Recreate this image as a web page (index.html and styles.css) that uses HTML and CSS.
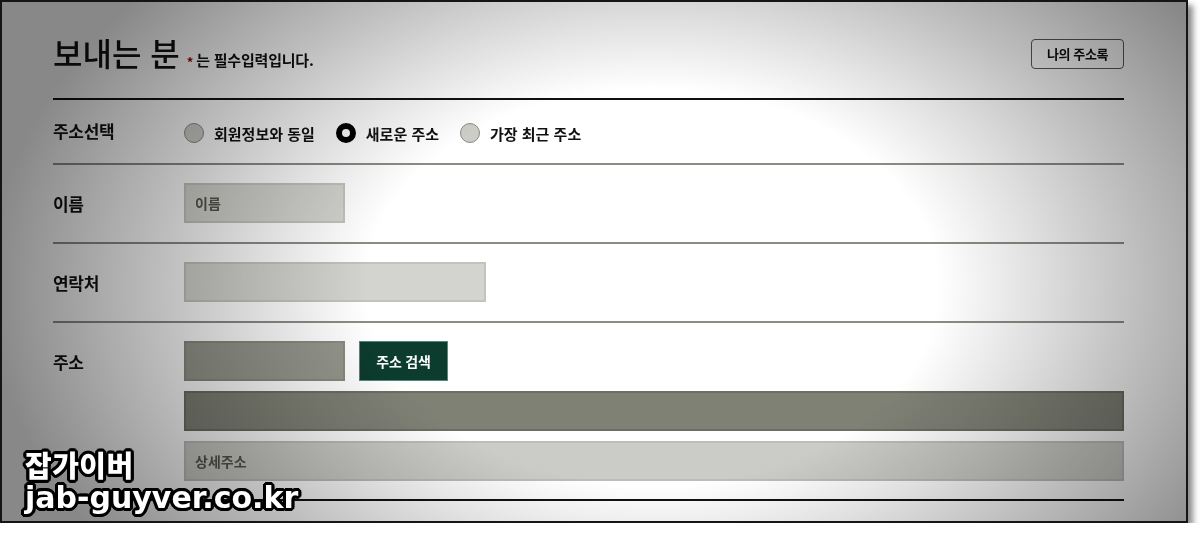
FILE: index.html
```html
<!DOCTYPE html>
<html lang="ko">
<head>
<meta charset="utf-8">
<title>보내는 분</title>
<link rel="stylesheet" href="styles.css">
</head>
<body>
<div class="frame">
  <div class="page">
    <header class="head">
      <div class="title-group">
        <h1 class="title">보내는 분</h1>
        <span class="req"><span class="star">*</span>는 필수입력입니다.</span>
      </div>
      <button class="book" type="button">나의 주소록</button>
    </header>

    <div class="row row-radio">
      <div class="label">주소선택</div>
      <div class="field radios">
        <label class="opt"><span class="radio"></span>회원정보와 동일</label>
        <label class="opt"><span class="radio on"></span>새로운 주소</label>
        <label class="opt"><span class="radio"></span>가장 최근 주소</label>
      </div>
    </div>

    <div class="row">
      <div class="label">이름</div>
      <div class="field">
        <div class="input w-short">이름</div>
      </div>
    </div>

    <div class="row">
      <div class="label">연락처</div>
      <div class="field">
        <div class="input w-mid"></div>
      </div>
    </div>

    <div class="row row-last">
      <div class="label">주소</div>
      <div class="field stack">
        <div class="line">
          <div class="input w-short zip"></div>
          <button class="search" type="button">주소 검색</button>
        </div>
        <div class="input full addr"></div>
        <div class="input full detail">상세주소</div>
      </div>
    </div>
  </div>
  <div class="vignette"></div>
  <div class="watermark">
    <div class="wm-ko">잡가이버</div>
    <div class="wm-en">jab-guyver.co.kr</div>
  </div>
</div>
</body>
</html>
```

FILE: styles.css
```css
* { box-sizing: border-box; }

html, body {
  margin: 0;
  padding: 0;
  background: #ffffff;
}

body {
  font-family: "Noto Sans CJK KR", "Noto Sans", sans-serif;
  color: #111;
}

.frame {
  position: relative;
  width: 1188px;
  height: 523px;
  border: 2px solid #151515;
  background: #ffffff;
  box-shadow: 5px 5px 6px rgba(0, 0, 0, 0.45);
  overflow: hidden;
}

.page {
  padding: 0 62px 0 51px;
}

/* header */
.head {
  display: flex;
  align-items: center;
  justify-content: space-between;
  padding: 35px 0 28px;
  border-bottom: 2px solid #111;
}

.title-group {
  display: flex;
  align-items: baseline;
}

.title {
  margin: 0;
  font-size: 32px;
  line-height: 30px;
  font-weight: 500;
  letter-spacing: 0;
  color: #111;
}

.req {
  margin-left: 7px;
  font-size: 15px;
  font-weight: 700;
  letter-spacing: -0.2px;
  color: #111;
}

.star {
  color: #a00000;
  font-size: 13px;
  margin-right: 3px;
  position: relative;
  top: 1px;
}

.book {
  width: 93px;
  height: 30px;
  padding: 0;
  border: 1.5px solid #5a5a5a;
  border-radius: 4px;
  background: transparent;
  font-family: inherit;
  font-size: 13px;
  font-weight: 700;
  letter-spacing: -0.4px;
  color: #111;
}

/* rows */
.row {
  display: flex;
  align-items: center;
  padding: 18px 0 19px;
  border-bottom: 2px solid #8c8c85;
}

.row-radio {
  height: 65px;
  padding: 0;
}

.row-last {
  align-items: flex-start;
  border-bottom: 2px solid #111;
  padding-bottom: 18px;
}

.label {
  width: 131px;
  flex: none;
  font-size: 17px;
  font-weight: 700;
  letter-spacing: -0.3px;
  color: #111;
}

.row-last .label {
  padding-top: 8px;
}

.row-radio .label {
  margin-top: -3px;
}

.field {
  flex: 1;
}

.radios {
  display: flex;
  align-items: center;
  gap: 21px;
  margin-top: 3px;
}

.opt {
  display: flex;
  align-items: center;
  gap: 10px;
  font-size: 15px;
  font-weight: 700;
  letter-spacing: 0;
  color: #111;
}

.radio {
  width: 20px;
  height: 20px;
  border-radius: 50%;
  background: #cdcdc8;
  border: 1.5px solid #8a8a84;
}

.radio.on {
  background: #ffffff;
  border: 6px solid #000;
}

.input {
  height: 40px;
  background: #d3d3cf;
  border: 2px solid #c3c3bd;
  padding: 0 9px;
  display: flex;
  align-items: center;
  font-size: 14px;
  font-weight: 700;
  color: #56564f;
}

.w-short { width: 161px; }
.w-mid { width: 302px; }
.full { width: 100%; }

.stack {
  display: flex;
  flex-direction: column;
  gap: 10px;
}

.line {
  display: flex;
  gap: 14px;
}

.zip {
  background: #95968c;
  border-color: #88897f;
}

.search {
  width: 89px;
  height: 40px;
  padding: 0;
  border: 1px solid #4f8a7c;
  background: #0b3c2e;
  color: #ffffff;
  font-family: inherit;
  font-size: 14px;
  font-weight: 700;
  letter-spacing: -0.2px;
}

.addr {
  background: #7f8175;
  border-color: #6c6e62;
}

.detail {
  background: #cbcbc7;
  border-color: #bdbdb8;
  font-weight: 700;
  color: #56564f;
}

/* photo vignette over the content */
.vignette {
  position: absolute;
  inset: 0;
  pointer-events: none;
  mix-blend-mode: multiply;
  background: radial-gradient(ellipse 650px 450px at 650px 285px,
    #ffffff 0%, #ffffff 44%, #e0e0e0 59%, #c0c0c0 74%, #a6a6a6 87%, #888888 102%);
}

.watermark {
  position: absolute;
  left: 23px;
  bottom: 5px;
  z-index: 2;
  color: #ffffff;
  font-weight: 900;
  text-shadow:
    3px 0 0 #000, -3px 0 0 #000, 0 3px 0 #000, 0 -3px 0 #000,
    2px 2px 0 #000, -2px 2px 0 #000, 2px -2px 0 #000, -2px -2px 0 #000,
    3px 1px 0 #000, -3px 1px 0 #000, 3px -1px 0 #000, -3px -1px 0 #000,
    1px 3px 0 #000, -1px 3px 0 #000, 1px -3px 0 #000, -1px -3px 0 #000;
}

.wm-ko {
  font-family: "Noto Sans CJK KR", sans-serif;
  font-size: 29px;
  line-height: 31px;
  letter-spacing: 0.5px;
}

.wm-en {
  font-family: "DejaVu Sans", sans-serif;
  font-weight: 700;
  font-size: 30px;
  line-height: 36px;
  letter-spacing: 0;
}
```
